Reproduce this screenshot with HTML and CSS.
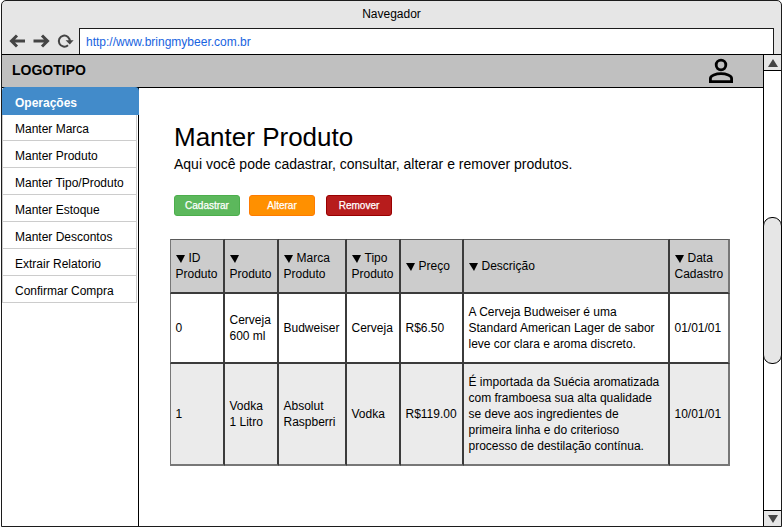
FILE: index.html
```html
<!DOCTYPE html>
<html lang="pt-BR">
<head>
<meta charset="utf-8">
<title>Navegador</title>
<link rel="stylesheet" href="styles.css">
</head>
<body>
<div class="window">
  <div class="title">Navegador</div>
  <div class="toolbar">
    <svg class="nav" width="68" height="16" viewBox="0 0 68 16" fill="none" stroke="#444" stroke-width="3">
      <path d="M16 8H3M8 2.500L2.500 8L8 13.500"/>
      <path d="M24.500 8H38M33 2.500L38.500 8L33 13.500"/>
      <path d="M59 12.200A5.500 5.500 0 1 1 60.800 8.500" stroke-width="2"/>
      <path d="M56.600 7.200H64.600L60.800 11.600Z" fill="#444" stroke="none"/>
    </svg>
    <div class="address">http://www.bringmybeer.com.br</div>
  </div>
  <div class="body">
    <div class="page">
      <header class="header">
        <span class="logo">LOGOTIPO</span>
        <svg class="user" width="26" height="26" viewBox="0 0 26 26" fill="none" stroke="#000" stroke-width="2.800">
          <circle cx="13" cy="7" r="4.800"/>
          <path d="M2.400 23.600V20.500C2.400 17.500 8 15.700 13 15.700S23.600 17.500 23.600 20.500V23.600Z"/>
        </svg>
      </header>
      <div class="columns">
        <nav class="sidebar">
          <div class="menu-title">Operações</div>
          <ul class="menu">
            <li>Manter Marca</li>
            <li>Manter Produto</li>
            <li>Manter Tipo/Produto</li>
            <li>Manter Estoque</li>
            <li>Manter Descontos</li>
            <li>Extrair Relatorio</li>
            <li>Confirmar Compra</li>
          </ul>
        </nav>
        <main class="content">
          <h1>Manter Produto</h1>
          <p class="lead">Aqui você pode cadastrar, consultar, alterar e remover produtos.</p>
          <div class="actions">
            <button class="add">Cadastrar</button>
            <button class="edit">Alterar</button>
            <button class="remove">Remover</button>
          </div>
          <table>
            <colgroup><col class="c1"><col class="c2"><col class="c3"><col class="c4"><col class="c5"><col class="c6"><col class="c7"></colgroup>
            <thead>
              <tr><th><i></i>ID<br>Produto</th><th><i></i><br>Produto</th><th><i></i>Marca<br>Produto</th><th><i></i>Tipo<br>Produto</th><th><i></i>Preço</th><th><i></i>Descrição</th><th><i></i>Data<br>Cadastro</th></tr>
            </thead>
            <tbody>
              <tr><td>0</td><td>Cerveja<br>600 ml</td><td>Budweiser</td><td>Cerveja</td><td>R$6.50</td><td>A Cerveja Budweiser é uma<br>Standard American Lager de sabor<br>leve cor clara e aroma discreto.</td><td>01/01/01</td></tr>
              <tr><td>1</td><td>Vodka<br>1 Litro</td><td>Absolut<br>Raspberri</td><td>Vodka</td><td>R$119.00</td><td>É importada da Suécia aromatizada<br>com framboesa sua alta qualidade<br>se deve aos ingredientes de<br>primeira linha e do criterioso<br>processo de destilação contínua.</td><td>10/01/01</td></tr>
            </tbody>
          </table>
        </main>
      </div>
    </div>
    <div class="scrollbar">
      <div class="arrow up"><svg width="10" height="8" viewBox="0 0 10 8"><path d="M5 0L10 8H0Z" fill="#444"/></svg></div>
      <div class="track"><div class="thumb"></div></div>
      <div class="arrow down"><svg width="10" height="8" viewBox="0 0 10 8"><path d="M0 0H10L5 8Z" fill="#444"/></svg></div>
    </div>
  </div>
</div>
</body>
</html>
```
FILE: styles.css
```css
* { box-sizing: border-box; }
body {
  margin: 0;
  background: #fff;
  color: #000;
  font: 12px/16px "Liberation Sans", Arial, sans-serif;
}
.window {
  display: flex;
  flex-direction: column;
  width: 781px;
  height: 527px;
  margin-left: 1px;
  border: 1px solid #1c1c1c;
  border-radius: 5px 5px 0 0;
  background: #e6e6e6;
}
.title { height: 27px; padding-top: 5px; text-align: center; }
.toolbar { display: flex; height: 26px; padding-right: 7px; }
.nav { flex: none; margin: 5px 2px 0 7px; }
.address {
  flex: 1;
  padding: 5px 5px 0 6px;
  border: 1px solid #1c1c1c;
  border-bottom: 0;
  background: #fff;
  color: #1763e0;
}
.body { display: flex; flex: 1; min-height: 0; border-top: 1px solid #000; background: #fff; }
.page { display: flex; flex-direction: column; flex: 1; }
.header {
  display: flex;
  justify-content: space-between;
  height: 33px;
  padding: 0 29px 0 10px;
  border-bottom: 1px solid #000;
  background: #c0c0c0;
}
.logo { padding-top: 7px; font-size: 14px; font-weight: bold; }
.user { margin-top: 3px; }
.columns { display: flex; flex: 1; margin-top: -1px; }
.sidebar { width: 137px; border-right: 1px solid #000; }
.menu-title {
  width: 137px;
  height: 28px;
  padding: 8px 13px 0;
  border-radius: 4px 4px 0 0;
  background: #428bca;
  color: #fff;
  font-weight: bold;
}
.menu { width: 135px; margin: 0; padding: 0; border: 1px solid #ccc; border-width: 0 1px; list-style: none; }
.menu li { height: 27px; padding: 7px 12px 0; border-bottom: 1px solid #ccc; }
.menu li:first-child { height: 26px; padding-top: 6px; }
.content { flex: 1; padding: 34px 0 0 31px; }
h1 { margin: 0 0 0 4px; font-size: 26px; font-weight: normal; line-height: 32px; }
.lead { margin: 3px 0 0 4px; font-size: 14px; }
.actions { display: flex; margin: 23px 0 23px 4px; }
button {
  width: 66px;
  height: 21px;
  padding: 0;
  border: 1px solid;
  border-radius: 3px;
  color: #fff;
  font: 10px "Liberation Sans", Arial, sans-serif;
  -webkit-text-stroke: 0.25px #fff;
}
.add { margin-right: 9px; border-color: #4cae4c; background: #5cb85c; }
.edit { margin-right: 11px; border-color: #ff7b00; background: #ff9000; }
.remove { border-color: #990000; background: #b71c1c; }
table { width: 560px; table-layout: fixed; border-spacing: 0; }
.c1 { width: 55px; }
.c2, .c4 { width: 54px; }
.c3 { width: 68px; }
.c5 { width: 63px; }
.c6 { width: 206px; }
.c7 { width: 60px; }
th, td {
  padding: 0 0 0 4.5px;
  border: solid #3b3b3b;
  border-width: 0 2px 2px 0;
  font-weight: normal;
  text-align: left;
  vertical-align: middle;
  white-space: nowrap;
}
th { height: 55px; border-top: 1px solid #5a5a5a; background: #ccc; }
td { height: 70px; }
th:first-child, td:first-child { border-left: 1px solid #777; }
th:last-child, td:last-child { border-right-color: #777; }
tr:last-child td { height: 102px; background: #ebebeb; }
tbody tr:last-child td { border-bottom-color: #777; }
th i {
  display: inline-block;
  margin: 0 4px -1px 0;
  border: 4.5px solid transparent;
  border-width: 8px 4px 0 5px;
  border-top-color: #000;
}
.scrollbar { display: flex; flex-direction: column; width: 18px; border-left: 1px solid #000; }
.arrow { display: flex; align-items: center; justify-content: center; height: 16px; background: #e6e6e6; }
.up { border-bottom: 1px solid #000; }
.down { border-top: 1px solid #000; }
.track { flex: 1; padding-top: 146px; }
.thumb { height: 147px; margin: 0 -1px; border: 1px solid #000; border-radius: 9px; background: #e6e6e6; }
```
